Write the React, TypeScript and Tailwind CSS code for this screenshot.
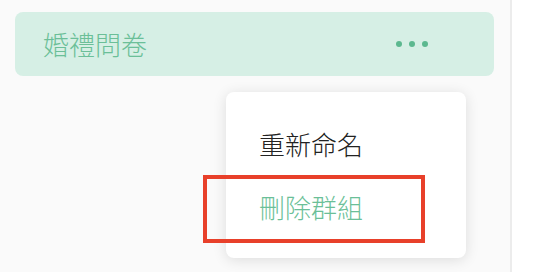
import React from 'react';

const font = { fontFamily: '"Noto Sans CJK TC", "Noto Sans", sans-serif' };

const App: React.FC = () => {
  return (
    <div className="relative flex h-[272px] w-[556px] overflow-hidden bg-white" style={font}>
      <aside className="h-full w-[512px] border-r-2 border-[#ececec] bg-[#fafafa] pt-3 pl-[15px] pr-4">
        <div className="flex h-16 items-center justify-between rounded-lg bg-[#d6efe5] pl-7 pr-[66px]">
          <span className="text-[26px] font-light leading-none text-[#6bbf98]">婚禮問卷</span>
          <div className="flex items-center gap-[7px]">
            <span className="h-[6px] w-[6px] rounded-full bg-[#5cb88f]" />
            <span className="h-[6px] w-[6px] rounded-full bg-[#5cb88f]" />
            <span className="h-[6px] w-[6px] rounded-full bg-[#5cb88f]" />
          </div>
        </div>
      </aside>

      <div className="absolute left-[226px] top-[92px] w-[240px] rounded-lg bg-white py-5 shadow-[0_2px_14px_rgba(0,0,0,0.12)]">
        <div className="flex h-[63px] items-center pl-[33px] text-[26px] font-light leading-none text-[#222222]">重新命名</div>
        <div className="flex h-[63px] items-center pl-[33px] text-[26px] font-light leading-none text-[#6bbf98]">刪除群組</div>
      </div>

      <div className="pointer-events-none absolute left-[203px] top-[175px] h-[68px] w-[222px] border-4 border-[#e8402a]" />
    </div>
  );
};

export default App;
